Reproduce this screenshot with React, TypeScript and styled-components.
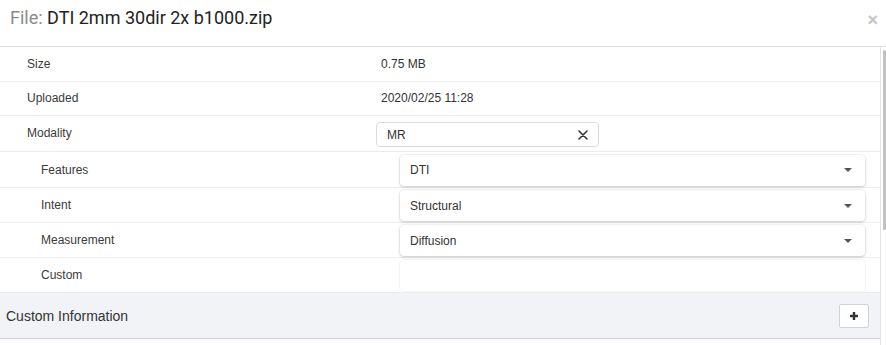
import React from "react";
import styled, { createGlobalStyle } from "styled-components";

const GlobalStyle = createGlobalStyle`
  html, body {
    margin: 0;
    padding: 0;
    background: #fff;
  }
  body {
    font-family: "Liberation Sans", Arial, sans-serif;
    color: #333;
  }
`;

const Modal = styled.div`
  width: 886px;
  height: 345px;
  display: flex;
  flex-direction: column;
  background: #fff;
  overflow: hidden;
`;

const Header = styled.header`
  box-sizing: border-box;
  height: 47px;
  padding: 6px 8px 0 10px;
  display: flex;
  justify-content: space-between;
  align-items: flex-start;
  border-bottom: 1px solid #e2e2e2;
  flex-shrink: 0;
`;

const Title = styled.h4`
  margin: 0;
  font-family: Roboto, "Liberation Sans", sans-serif;
  font-weight: 400;
  font-size: 18px;
  line-height: 24px;
  color: #222;

  span {
    color: #8a8a8a;
  }
`;

const Close = styled.button`
  border: none;
  background: none;
  padding: 0;
  margin-top: 5px;
  font-family: "Liberation Sans", Arial, sans-serif;
  font-size: 18px;
  font-weight: bold;
  line-height: 18px;
  color: #c4c4c4;
  cursor: pointer;
`;

const Body = styled.div`
  flex: 1;
  min-height: 0;
  display: flex;
`;

const Content = styled.div`
  flex: 1;
  overflow: hidden;
`;

const ScrollRail = styled.div`
  width: 4px;
  flex-shrink: 0;
  border-left: 1px solid #e4e4e4;
  padding: 3px 0 0 1px;
`;

const ScrollThumb = styled.div`
  width: 3px;
  height: 180px;
  margin-left: 1px;
  border-radius: 2px;
  background: #c2c2c2;
`;

const Row = styled.div<{ $sub?: boolean; $h?: number }>`
  box-sizing: border-box;
  display: grid;
  grid-template-columns: ${(p) => (p.$sub ? "400px" : "376px")} 1fr;
  align-items: center;
  min-height: ${(p) => p.$h ?? 35}px;
  padding: ${(p) => (p.$sub ? "2px 15px 1px 0" : "0")};
  border-bottom: 1px solid #ececec;
  font-size: 12px;
`;

const Label = styled.div<{ $sub?: boolean }>`
  padding-left: ${(p) => (p.$sub ? "41px" : "27px")};
  color: #3a3a3a;
  line-height: 17px;
`;

const Value = styled.div`
  padding-left: 5px;
  color: #333;
  line-height: 17px;
`;

const TagInput = styled.div`
  box-sizing: border-box;
  width: 223px;
  height: 25px;
  margin: 6px 0 4px;
  padding: 0 10px;
  display: flex;
  align-items: center;
  justify-content: space-between;
  border: 1px solid #dcdcdc;
  border-radius: 4px;
  color: #333;
`;

const Clear = styled.span`
  display: flex;
  color: #333;
`;

const Select = styled.div<{ $empty?: boolean }>`
  box-sizing: border-box;
  height: 31px;
  padding: 0 13px 0 10px;
  display: flex;
  align-items: center;
  justify-content: space-between;
  background: #fff;
  border-radius: 4px;
  box-shadow: ${(p) =>
    p.$empty
      ? "0 0 0 1px #f4f4f4"
      : "0 1px 3px rgba(0, 0, 0, 0.2), 0 0 0 1px rgba(0, 0, 0, 0.03)"};
  color: #333;
`;

const Caret = styled.span`
  width: 0;
  height: 0;
  border-left: 4px solid transparent;
  border-right: 4px solid transparent;
  border-top: 4px solid #555;
`;

const Section = styled.div`
  box-sizing: border-box;
  height: 46px;
  padding: 0 11px 0 6px;
  display: flex;
  align-items: center;
  justify-content: space-between;
  background: #f2f3f6;
  border-bottom: 1px solid #cdd1da;
`;

const SectionTitle = styled.h5`
  margin: 0;
  font-size: 14px;
  font-weight: 400;
  color: #333;
`;

const AddButton = styled.button`
  box-sizing: border-box;
  width: 30px;
  height: 24px;
  padding: 0;
  display: flex;
  align-items: center;
  justify-content: center;
  background: #fff;
  border: 1px solid #cfd2da;
  border-radius: 2px;
  cursor: pointer;
`;

const XIcon = () => (
  <svg width="10" height="10" viewBox="0 0 10 10">
    <path d="M1 1L9 9M9 1L1 9" stroke="#333" strokeWidth="1.6" strokeLinecap="round" />
  </svg>
);

const PlusIcon = () => (
  <svg width="10" height="10" viewBox="0 0 10 10">
    <path d="M5 1V9M1 5H9" stroke="#333" strokeWidth="2.4" />
  </svg>
);

const subFields = [
  { label: "Features", value: "DTI", h: 36 },
  { label: "Intent", value: "Structural", h: 35 },
  { label: "Measurement", value: "Diffusion", h: 35 },
];

export default function App() {
  return (
    <>
      <GlobalStyle />
      <Modal>
        <Header>
          <Title>
            <span>File: </span>DTI 2mm 30dir 2x b1000.zip
          </Title>
          <Close aria-label="Close">×</Close>
        </Header>
        <Body>
          <Content>
            <Row $h={35}>
              <Label>Size</Label>
              <Value>0.75 MB</Value>
            </Row>
            <Row $h={34}>
              <Label>Uploaded</Label>
              <Value>2020/02/25 11:28</Value>
            </Row>
            <Row $h={36}>
              <Label>Modality</Label>
              <div>
                <TagInput>
                  MR
                  <Clear>
                    <XIcon />
                  </Clear>
                </TagInput>
              </div>
            </Row>
            {subFields.map((f) => (
              <Row $sub $h={f.h} key={f.label}>
                <Label $sub>{f.label}</Label>
                <Select>
                  {f.value}
                  <Caret />
                </Select>
              </Row>
            ))}
            <Row $sub $h={35}>
              <Label $sub>Custom</Label>
              <Select $empty />
            </Row>
            <Section>
              <SectionTitle>Custom Information</SectionTitle>
              <AddButton aria-label="Add">
                <PlusIcon />
              </AddButton>
            </Section>
          </Content>
          <ScrollRail>
            <ScrollThumb />
          </ScrollRail>
        </Body>
      </Modal>
    </>
  );
}
